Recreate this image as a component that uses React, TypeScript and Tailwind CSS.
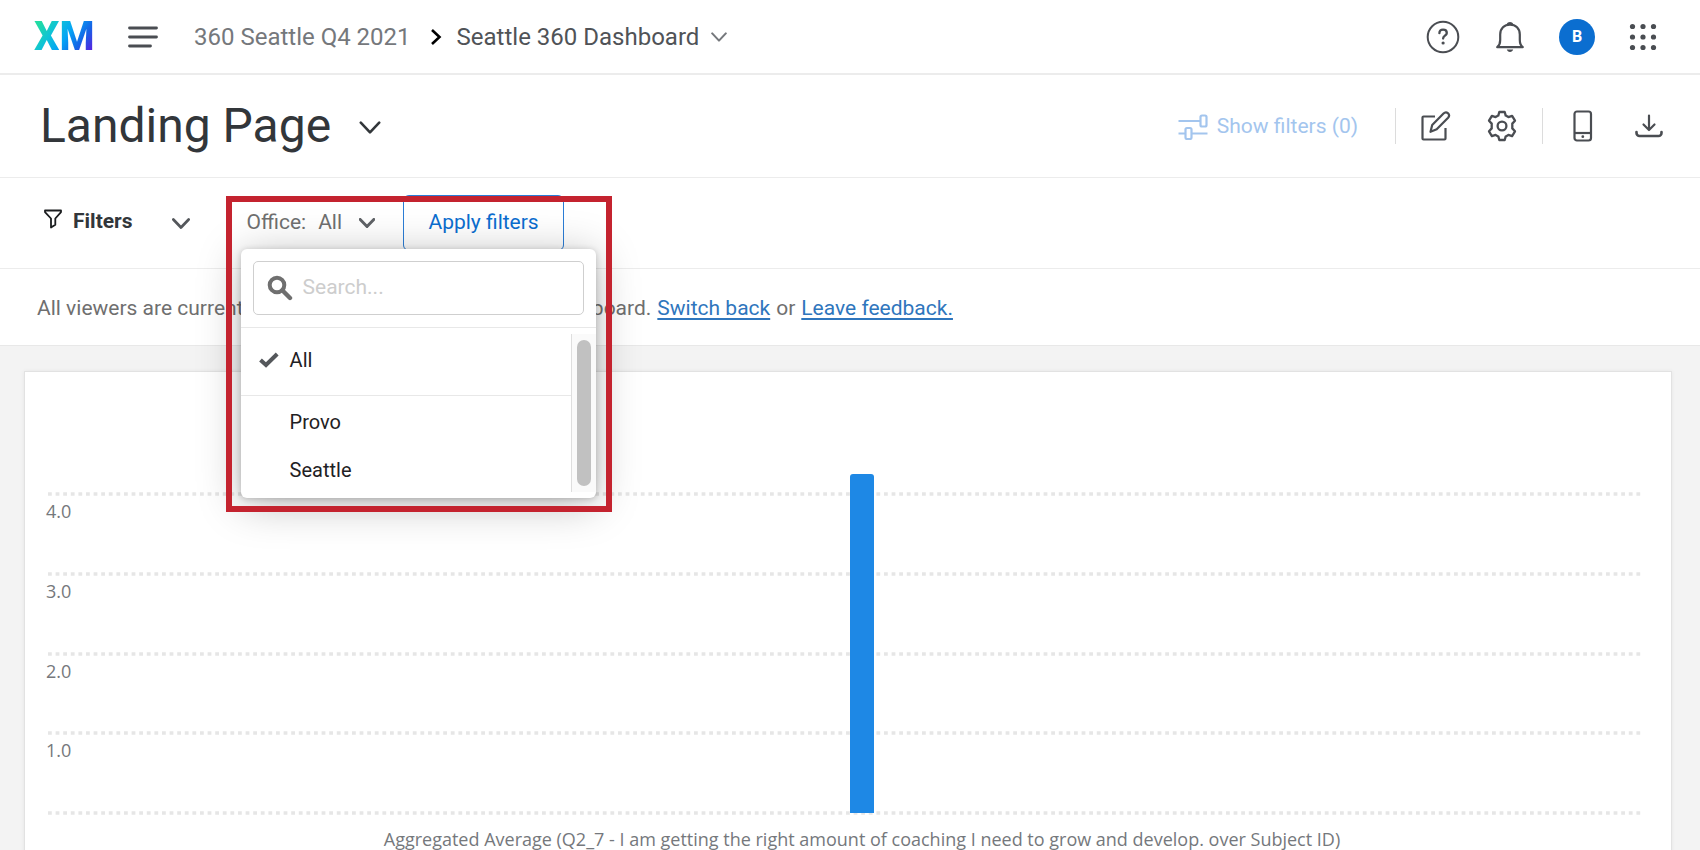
/**
 * Dashboard landing page
 * Top navigation, page toolbar, office filter menu and a bar chart widget
 */

import { useState } from 'react';

interface IconProps {
  className?: string;
}

interface ChartBar {
  label: string;
  value: number;
}

const OFFICES = ['Provo', 'Seattle'];

const AXIS_MAX = 4;
const AXIS_LABELS = ['4.0', '3.0', '2.0', '1.0'];

const BARS: ChartBar[] = [
  {
    label:
      'Aggregated Average (Q2_7 - I am getting the right amount of coaching I need to grow and develop. over Subject ID)',
    value: 4.22,
  },
];

const Logo: React.FC = () => (
  <span className="block w-max bg-[linear-gradient(125deg,#21dba4_12%,#0fc3d6_32%,#04a4f5_52%,#1464e6_72%,#5a1ee0_92%)] bg-clip-text pt-px font-[Roboto,sans-serif] text-[40px] leading-10 font-extrabold text-transparent">
    XM
  </span>
);

const MenuIcon: React.FC = () => (
  <svg width="30" height="24" viewBox="0 0 30 24" fill="none" stroke="#4a4d52" strokeWidth="2.8" strokeLinecap="round">
    <path d="M1.5 3h27M1.5 12h27M1.5 21h21" />
  </svg>
);

const ChevronDown: React.FC<IconProps> = ({ className }) => (
  <svg viewBox="0 0 20 12" fill="none" stroke="currentColor" strokeLinecap="round" strokeLinejoin="round" className={className}>
    <path d="M1.5 1.5 10 10.5l8.5-9" />
  </svg>
);

const HelpIcon: React.FC = () => (
  <svg width="34" height="34" viewBox="0 0 34 34" fill="none" stroke="currentColor" strokeWidth="2" strokeLinecap="round">
    <circle cx="17" cy="17" r="15.3" />
    <path d="M13.4 13.2c0-2.2 1.6-3.6 3.7-3.6s3.7 1.3 3.7 3.3c0 2.7-3.7 2.9-3.7 5.6" strokeWidth="2.3" />
    <circle cx="17.1" cy="23" r="1.6" fill="currentColor" stroke="none" />
  </svg>
);

const BellIcon: React.FC = () => (
  <svg width="30" height="32" viewBox="0 0 30 32" fill="none" stroke="currentColor" strokeWidth="2.2" strokeLinejoin="round">
    <path d="M2.2 26.2c2.6-2 3-4.2 3-7.2v-5.5C5.2 7.6 9.3 3.6 15 3.6s9.8 4 9.8 9.9V19c0 3 .4 5.2 3 7.2z" />
    <path d="M11.6 3.3c.7-1.5 1.9-2.3 3.4-2.3s2.7.8 3.4 2.3zM11.8 28.5h6.4c-.5 1.5-1.6 2.5-3.2 2.5s-2.7-1-3.2-2.5z" fill="currentColor" stroke="none" />
  </svg>
);

const AppsIcon: React.FC = () => (
  <svg width="28" height="28" viewBox="0 0 28 28" fill="currentColor">
    {[3.5, 14, 24.5].map((cy) =>
      [3.5, 14, 24.5].map((cx) => <circle key={`${cx}-${cy}`} cx={cx} cy={cy} r="2.6" />)
    )}
  </svg>
);

const SlidersIcon: React.FC = () => (
  <svg width="30" height="26" viewBox="0 0 30 26" fill="none" stroke="currentColor" strokeWidth="2.2">
    <path d="M0.5 7H22M29.5 19.5H14M7 19.5H0.5" />
    <rect x="22.5" y="1.5" width="6" height="11" rx="1.5" />
    <rect x="7.5" y="14" width="6" height="11" rx="1.5" />
  </svg>
);

const EditIcon: React.FC = () => (
  <svg width="30" height="30" viewBox="0 0 30 30" fill="none" stroke="currentColor" strokeWidth="2.2" strokeLinejoin="round">
    <path d="M14 5.5H2.5a1 1 0 0 0-1 1V27.5a1 1 0 0 0 1 1H23.5a1 1 0 0 0 1-1V17" />
    <path d="M9.5 20.8l1.7-6.8L22.5 2.5c1.3-1.3 3.3-1.3 4.6-.2 1.2 1.2 1.2 3 0 4.4L15.7 18.3z" />
  </svg>
);

const GearIcon: React.FC = () => (
  <svg width="30" height="32" viewBox="0 0 30 32" fill="none" stroke="currentColor" strokeWidth="2.3" strokeLinejoin="round">
    <path d="M12.3 2h5.4l1 3.6 2.7 1.5 3.7-1.2 2.9 4.8-2.7 2.9v4.8l2.7 2.9-2.9 4.8-3.7-1.2-2.7 1.5-1 3.6h-5.4l-1-3.6-2.7-1.5-3.7 1.2L2 21.3l2.7-2.9v-4.8L2 10.7l2.9-4.8 3.7 1.2 2.7-1.5z" />
    <circle cx="15" cy="16" r="4.4" />
  </svg>
);

const PhoneIcon: React.FC = () => (
  <svg width="20" height="32" viewBox="0 0 20 32" fill="none" stroke="currentColor" strokeWidth="2.2">
    <rect x="1.5" y="1.5" width="16.5" height="29" rx="2.5" />
    <path d="M1.5 23h16.5" />
    <circle cx="9.8" cy="26.7" r="1.4" fill="currentColor" stroke="none" />
  </svg>
);

const DownloadIcon: React.FC = () => (
  <svg width="28" height="24" viewBox="0 0 28 24" fill="none" stroke="currentColor" strokeWidth="2.2" strokeLinecap="round" strokeLinejoin="round">
    <path d="M14 1.5v14M8.5 10.5 14 16l5.5-5.5" />
    <path d="M1.5 18v1a3 3 0 0 0 3 3h19a3 3 0 0 0 3-3v-1" strokeWidth="2.6" />
  </svg>
);

const FunnelIcon: React.FC = () => (
  <svg width="18" height="20" viewBox="0 0 18 20" fill="none" stroke="#1a1c1e" strokeWidth="1.8" strokeLinejoin="round">
    <path d="M1 1.5h16v1.6l-5.7 6.4v6.2L7 18.5v-9L1 3.1z" />
  </svg>
);

const SearchIcon: React.FC = () => (
  <svg width="26" height="26" viewBox="0 0 26 26" fill="none" stroke="currentColor" strokeWidth="4">
    <circle cx="10" cy="10" r="7.3" />
    <path d="M15.3 15.3 23 23" strokeWidth="4.4" strokeLinecap="round" />
  </svg>
);

const CheckIcon: React.FC = () => (
  <svg width="20" height="16" viewBox="0 0 20 16" fill="none" stroke="currentColor" strokeWidth="4">
    <path d="M1.5 8 7 13 18.2 2" />
  </svg>
);

const TopNav: React.FC = () => (
  <header className="flex h-[75px] items-center border-b-2 border-[#ececec] pr-[43px] pl-[34px] text-[#4a4d52]">
    <a href="#home" aria-label="Home" className="w-14">
      <Logo />
    </a>
    <button type="button" aria-label="Menu" className="ml-[38px]">
      <MenuIcon />
    </button>
    <nav className="ml-9 flex items-center text-[24px] leading-8">
      <a href="#project" className="text-[#75787c]">
        360 Seattle Q4 2021
      </a>
      <svg width="12" height="18" viewBox="0 0 12 18" fill="none" stroke="#000" strokeWidth="2.6" className="mr-[15px] ml-[19px]">
        <path d="M2 2l7.5 7L2 16" />
      </svg>
      <button type="button" className="flex items-center gap-3 text-[#505357]">
        Seattle 360 Dashboard
        <ChevronDown className="h-[10px] w-4 stroke-[2.6] text-[#75787c]" />
      </button>
    </nav>
    <div className="ml-auto flex items-center">
      <button type="button" aria-label="Help">
        <HelpIcon />
      </button>
      <button type="button" aria-label="Notifications" className="ml-[35px]">
        <BellIcon />
      </button>
      <button
        type="button"
        aria-label="Account"
        className="ml-[34px] size-9 rounded-full bg-[#0b6ed0] text-[16px] font-bold text-white"
      >
        B
      </button>
      <button type="button" aria-label="Apps" className="ml-[34px]">
        <AppsIcon />
      </button>
    </div>
  </header>
);

const PageToolbar: React.FC = () => (
  <div className="flex h-[103px] items-center border-b border-[#ececec] pr-[37px] pl-10 text-[#4a4d52]">
    <h1 className="text-[48px] leading-none text-[#32363a]">Landing Page</h1>
    <button type="button" aria-label="Switch page" className="ml-7 pt-[3px] text-[#32363a]">
      <ChevronDown className="h-[13px] w-[22px] stroke-[2.4]" />
    </button>
    <div className="ml-auto flex items-center">
      <button type="button" className="flex items-center gap-[9px] pt-[2px] text-[21px] text-[#a3c5ee]">
        <SlidersIcon />
        Show filters (0)
      </button>
      <div className="ml-[37px] h-9 w-px bg-[#dcdcdc]" />
      <button type="button" aria-label="Edit page" className="ml-[25px]">
        <EditIcon />
      </button>
      <button type="button" aria-label="Settings" className="ml-9">
        <GearIcon />
      </button>
      <div className="ml-[25px] h-9 w-px bg-[#dcdcdc]" />
      <button type="button" aria-label="Mobile preview" className="ml-[30px]">
        <PhoneIcon />
      </button>
      <button type="button" aria-label="Download" className="ml-[42px]">
        <DownloadIcon />
      </button>
    </div>
  </div>
);

interface OfficeMenuProps {
  selected: string;
  onSelect: (office: string) => void;
}

const OfficeMenu: React.FC<OfficeMenuProps> = ({ selected, onSelect }) => {
  const [query, setQuery] = useState('');
  const offices = OFFICES.filter((office) => office.toLowerCase().includes(query.toLowerCase()));

  return (
    <div className="absolute top-[71px] -left-[6px] w-[355px] rounded-md bg-white pb-[6px] text-[20px] text-[#1f2124] shadow-[0_6px_44px_rgba(0,0,0,0.28),0_1px_6px_rgba(0,0,0,0.2)]">
      <div className="border-b border-[#e8e8e8] p-3">
        <label className="flex h-[54px] items-center gap-[10px] rounded-[5px] border border-[#cfcfcf] px-[13px] text-[#6f6f6f]">
          <SearchIcon />
          <input
            type="text"
            aria-label="Search offices"
            placeholder="Search..."
            value={query}
            onChange={(e) => setQuery(e.target.value)}
            className="min-w-0 flex-1 text-[21px] outline-none placeholder:text-[#cdcdcd]"
          />
        </label>
      </div>
      <div className="flex">
        <div className="flex-1">
          <button
            type="button"
            onClick={() => onSelect('All')}
            className="flex h-[68px] w-full items-center border-b border-[#e8e8e8] pb-1 pl-[18px]"
          >
            <span className="w-[31px] text-[#54575b]">{selected === 'All' && <CheckIcon />}</span>
            All
          </button>
          {offices.map((office) => (
            <button
              key={office}
              type="button"
              onClick={() => onSelect(office)}
              className="flex h-12 w-full items-center pt-1 pl-[18px]"
            >
              <span className="w-[31px] text-[#54575b]">{selected === office && <CheckIcon />}</span>
              {office}
            </button>
          ))}
        </div>
        {/* Scroll track */}
        <div className="mt-[6px] w-[25px] border-l border-[#dedede] bg-[#fafafa] py-[6px] pl-[5px]">
          <div className="h-full w-[14px] rounded-full bg-[#c1c1c1]" />
        </div>
      </div>
    </div>
  );
};

const FilterBar: React.FC = () => {
  const [office, setOffice] = useState('All');
  const [isOpen, setIsOpen] = useState(true);

  const handleSelect = (value: string) => {
    setOffice(value);
    setIsOpen(false);
  };

  return (
    <div className="relative z-10 flex h-[91px] items-center border-b border-[#ececec] pl-11">
      <button type="button" className="flex items-center text-[21px] font-bold text-[#32363a]">
        <span className="pb-2">
          <FunnelIcon />
        </span>
        <span className="ml-[11px] pb-[2px]">Filters</span>
        <ChevronDown className="ml-[39px] h-[11px] w-[18px] stroke-[3] text-[#54575b]" />
      </button>
      <div className="relative ml-[57px] flex h-full items-center">
        <button
          type="button"
          aria-expanded={isOpen}
          onClick={() => setIsOpen(!isOpen)}
          className="flex items-center text-[21px] text-[#6f6f6f]"
        >
          Office:
          <span className="ml-3">{office}</span>
          <ChevronDown className="ml-[17px] h-[10px] w-4 stroke-[3.6] text-[#5f6266]" />
        </button>
        {/* Highlight frame around the filter */}
        <div className="pointer-events-none absolute top-[18px] -left-[21px] z-10 h-[316px] w-[386px] border-[6px] border-[#c4232f]" />
        <button
          type="button"
          className="ml-7 h-[56px] w-[161px] rounded-md border border-[#2b7dd6] text-[21px] text-[#0b6ed0]"
        >
          Apply filters
        </button>
        {isOpen && <OfficeMenu selected={office} onSelect={handleSelect} />}
      </div>
    </div>
  );
};

const Notice: React.FC = () => (
  <p className="flex h-[77px] items-center gap-[6px] border-b border-[#e8e8e8] pt-[3px] pl-[37px] text-[21px] whitespace-nowrap text-[#6f6f6f]">
    All viewers are currently seeing the new version of this dashboard.
    <a href="#switch-back" className="text-[#2f76bd] underline underline-offset-3">
      Switch back
    </a>
    or
    <a href="#feedback" className="text-[#2f76bd] underline underline-offset-3">
      Leave feedback.
    </a>
  </p>
);

const GridLine: React.FC = () => (
  <svg width="100%" height="4" className="block">
    <line x1="0" y1="2" x2="100%" y2="2" stroke="#e6e6e6" strokeWidth="3.5" strokeDasharray="3.8 3.8" />
  </svg>
);

const ChartWidget: React.FC = () => (
  <section className="border border-[#e2e2e2] bg-white px-[23px] pt-[120px] pb-10 font-['Open_Sans','Noto_Sans',sans-serif] text-[#75787c] shadow-[0_0_4px_rgba(0,0,0,0.06)]">
    <div className="relative mr-1 flex h-[319px] flex-col">
      {AXIS_LABELS.map((label) => (
        <div key={label} className="flex-1">
          <GridLine />
          <div className="mt-[3px] -ml-[2px] text-[18px] leading-6">{label}</div>
        </div>
      ))}
      <div className="absolute top-0 right-0 -bottom-[2px] left-8 flex items-end justify-around">
        {BARS.map((bar) => (
          <div
            key={bar.label}
            className="w-6 rounded-t-[3px] bg-[#1e88e5]"
            style={{ height: `${(bar.value / AXIS_MAX) * 100}%` }}
          />
        ))}
      </div>
    </div>
    <div className="mr-1">
      <GridLine />
      <div className="mt-[10px] ml-8 flex justify-around text-[18px] leading-7">
        {BARS.map((bar) => (
          <span key={bar.label}>{bar.label}</span>
        ))}
      </div>
    </div>
  </section>
);

const App: React.FC = () => {
  return (
    <div className="flex h-screen flex-col overflow-hidden bg-white font-[Roboto,'Liberation_Sans',sans-serif]">
      <TopNav />
      <PageToolbar />
      <FilterBar />
      <Notice />
      <main className="flex-1 overflow-hidden bg-[#f3f3f3] pt-[25px] pr-7 pl-6">
        <ChartWidget />
      </main>
    </div>
  );
};

export default App;
